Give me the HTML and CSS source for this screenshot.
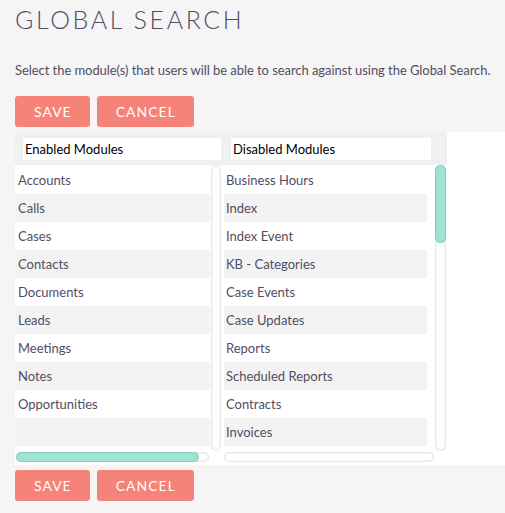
FILE: index.html
```html
<!DOCTYPE html>
<html>
<head>
<meta charset="utf-8">
<link rel="stylesheet" href="styles.css">
</head>
<body>
<h1 class="title">GLOBAL SEARCH</h1>
<p class="desc">Select the module(s) that users will be able to search against using the Global Search.</p>
<div class="actions">
  <button class="btn">SAVE</button>
  <button class="btn">CANCEL</button>
</div>
<div class="panel">
  <div class="grid">
    <div class="head">
      <div class="hcell hcell-left">Enabled Modules</div>
      <div class="hcell hcell-right">Disabled Modules</div>
    </div>
    <div class="body">
      <div class="col col-left">
        <div class="colmain">
          <ul class="list list-left">
            <li>Accounts</li>
            <li>Calls</li>
            <li>Cases</li>
            <li>Contacts</li>
            <li>Documents</li>
            <li>Leads</li>
            <li>Meetings</li>
            <li>Notes</li>
            <li>Opportunities</li>
            <li></li>
          </ul>
          <div class="vscroll vscroll-left"></div>
        </div>
        <div class="hscroll hscroll-left"><div class="hthumb"></div></div>
      </div>
      <div class="col col-right">
        <div class="colmain">
          <ul class="list list-right">
            <li>Business Hours</li>
            <li>Index</li>
            <li>Index Event</li>
            <li>KB - Categories</li>
            <li>Case Events</li>
            <li>Case Updates</li>
            <li>Reports</li>
            <li>Scheduled Reports</li>
            <li>Contracts</li>
            <li>Invoices</li>
          </ul>
          <div class="vscroll vscroll-right"><div class="vthumb"></div></div>
        </div>
        <div class="hscroll hscroll-right"></div>
      </div>
    </div>
  </div>
</div>
<div class="actions actions-bottom">
  <button class="btn">SAVE</button>
  <button class="btn">CANCEL</button>
</div>
</body>
</html>
```
FILE: styles.css
```css
html, body {
  margin: 0;
  padding: 0;
}
body {
  background: #f5f5f5;
  font-family: Lato, "Liberation Sans", sans-serif;
  color: #534d64;
  padding-left: 15px;
}
.title {
  margin: 0;
  padding-top: 4px;
  font-size: 25px;
  line-height: 30px;
  font-weight: 300;
  letter-spacing: 2.6px;
  color: #534d64;
}
.desc {
  margin: 0;
  padding-top: 28px;
  font-size: 13px;
  line-height: 16px;
  letter-spacing: -0.06px;
}
.actions {
  display: flex;
  gap: 7px;
  padding-top: 18px;
}
.actions-bottom {
  padding-top: 5px;
}
.btn {
  background: #f68379;
  border: none;
  border-radius: 3px;
  color: #fff;
  font-family: Lato, "Liberation Sans", sans-serif;
  font-size: 14px;
  letter-spacing: 1px;
  height: 31px;
  padding: 0 18px 0 19px;
  margin: 0;
}
.panel {
  margin-top: 5px;
  background: #fff;
  height: 333px;
}
.grid {
  width: 432px;
}
.head {
  background: #f0f0f0;
  height: 33px;
  display: flex;
  align-items: flex-start;
  padding-top: 6px;
  box-sizing: border-box;
}
.hcell {
  background: #fff;
  height: 22px;
  line-height: 22px;
  font-size: 13px;
  color: #000;
  padding-left: 2px;
  box-sizing: border-box;
}
.hcell-left {
  margin-left: 8px;
  width: 198px;
}
.hcell-right {
  margin-left: 10px;
  width: 200px;
}
.body {
  display: flex;
}
.col {
  display: flex;
  flex-direction: column;
}
.colmain {
  display: flex;
  align-items: flex-start;
}
.list {
  list-style: none;
  margin: 1px 0 0 0;
  padding: 0;
}
.list li {
  height: 28px;
  line-height: 28px;
  font-size: 13px;
  padding-left: 3px;
  white-space: nowrap;
}
.list li:nth-child(even) {
  background: #f3f3f3;
}
.list-left {
  width: 195px;
}
.list-right {
  width: 203px;
  margin-left: 0;
}
.list-right li {
  padding-left: 2px;
}
.col-right {
  margin-left: 3px;
}
.vscroll {
  height: 286px;
  border-radius: 6px;
  background: #fff;
  box-shadow: inset 0 0 2px 1px rgba(0, 0, 0, 0.13);
  box-sizing: border-box;
}
.vscroll-left {
  width: 10px;
  margin-left: 1px;
}
.vscroll-right {
  width: 11px;
  margin-left: 8px;
}
.vthumb {
  height: 78px;
  border-radius: 6px;
  background: #9ee3d4;
  box-shadow: inset 0 0 1px 1px rgba(80, 170, 150, 0.35);
}
.hscroll {
  height: 10px;
  border-radius: 6px;
  background: #fff;
  box-shadow: inset 0 0 2px 1px rgba(0, 0, 0, 0.13);
  margin-top: 1px;
}
.hscroll-left {
  width: 193px;
  margin-left: 1px;
}
.hscroll-right {
  width: 210px;
}
.hthumb {
  width: 183px;
  height: 10px;
  border-radius: 6px;
  background: #9ee3d4;
  box-shadow: inset 0 0 1px 1px rgba(80, 170, 150, 0.35);
}
```
